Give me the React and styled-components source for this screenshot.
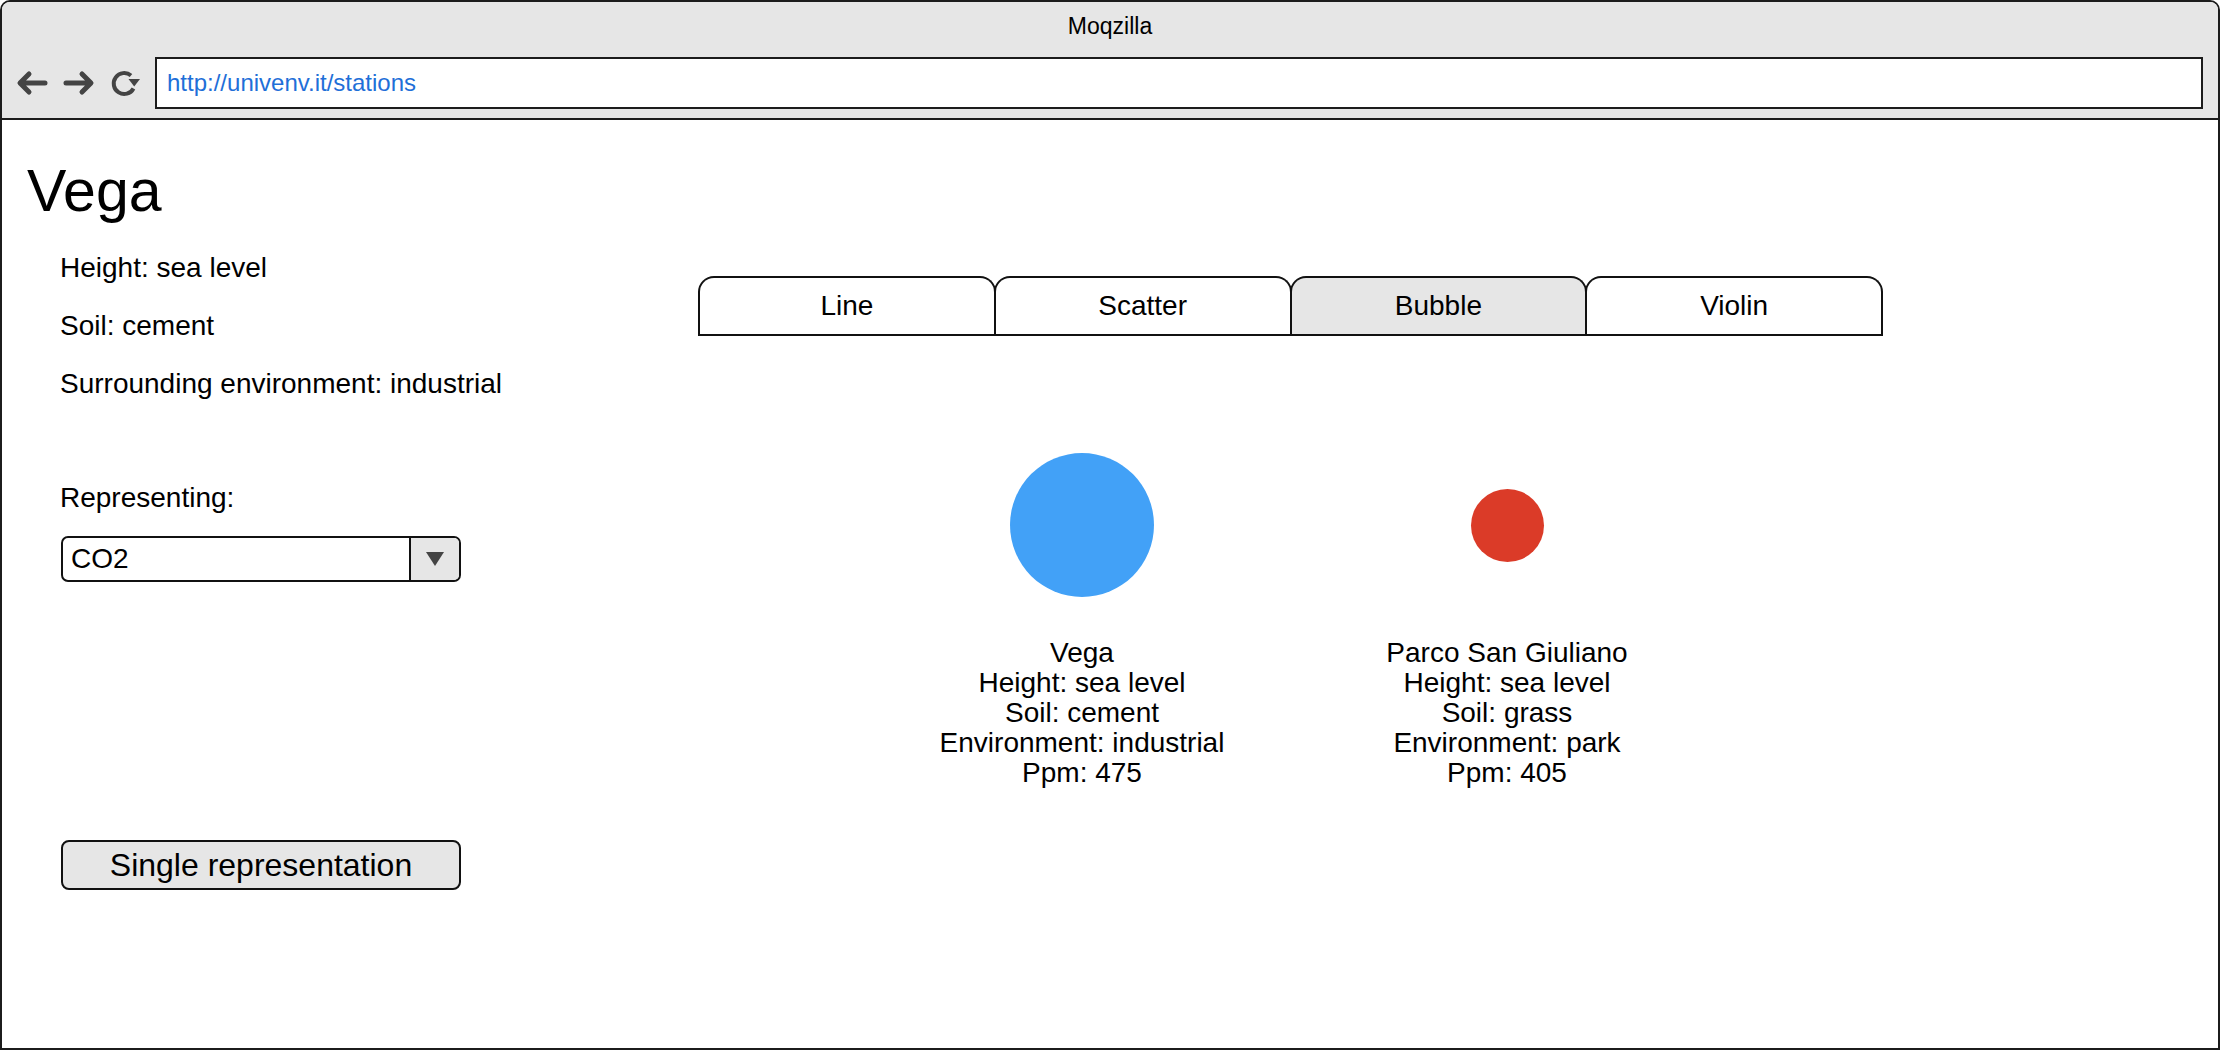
import styled, { createGlobalStyle } from "styled-components";

const GlobalStyle = createGlobalStyle`
  body {
    margin: 0;
    font-family: "Liberation Sans", Arial, sans-serif;
    color: #000;
    background: #fff;
  }
`;

// browser chrome
const Window = styled.div`
  width: 2220px;
  height: 1050px;
  box-sizing: border-box;
  border: 2px solid #1c1c1c;
  border-radius: 10px 10px 0 0;
  overflow: hidden;
  display: flex;
  flex-direction: column;
`;

const TitleBar = styled.header`
  background: #e6e6e6;
  border-bottom: 2px solid #1c1c1c;
  padding-bottom: 9px;
`;

const Title = styled.div`
  height: 55px;
  box-sizing: border-box;
  padding-top: 10px;
  font-size: 23px;
  line-height: 28px;
  text-align: center;
`;

const NavRow = styled.div`
  display: flex;
  align-items: center;
  gap: 15px;
  padding: 0 15px 0 14px;
`;

const NavIcon = styled.svg`
  flex: none;
  display: block;
`;

const UrlBox = styled.div`
  flex: 1;
  height: 52px;
  box-sizing: border-box;
  border: 2px solid #1c1c1c;
  background: #fff;
  display: flex;
  align-items: center;
  padding-left: 10px;
  font-size: 24px;
  color: #1f6fd8;
`;

// page
const Body = styled.main`
  flex: 1;
  display: flex;
`;

const LeftPanel = styled.section`
  width: 500px;
  flex: none;
  padding: 38px 0 0 25px;
  box-sizing: border-box;
  display: flex;
  flex-direction: column;
`;

const Heading = styled.h1`
  margin: 0;
  font-size: 59px;
  font-weight: normal;
  line-height: 66px;
`;

const InfoList = styled.div`
  display: flex;
  flex-direction: column;
  gap: 26px;
  margin: 28px 0 0 33px;
`;

const Info = styled.div`
  font-size: 28px;
  line-height: 32px;
  white-space: nowrap;
  margin-top: ${(p) => p.$top || 0}px;
`;

const Select = styled.div`
  margin: 22px 0 0 34px;
  width: 400px;
  height: 46px;
  box-sizing: border-box;
  border: 2px solid #111;
  border-radius: 7px;
  display: flex;
  overflow: hidden;
`;

const SelectValue = styled.div`
  flex: 1;
  display: flex;
  align-items: center;
  padding-left: 8px;
  font-size: 28px;
`;

const SelectArrow = styled.div`
  width: 48px;
  border-left: 2px solid #111;
  background: #e6e6e6;
  display: flex;
  align-items: center;
  justify-content: center;

  &::after {
    content: "";
    border-left: 9px solid transparent;
    border-right: 9px solid transparent;
    border-top: 14px solid #444;
  }
`;

const Button = styled.button`
  margin: 258px 0 0 34px;
  width: 400px;
  height: 50px;
  box-sizing: border-box;
  border: 2px solid #111;
  border-radius: 8px;
  background: #e6e6e6;
  font-family: inherit;
  font-size: 32px;
  color: #000;
  padding: 0;
`;

const MainPanel = styled.section`
  flex: 1;
  padding: 156px 0 0 196px;
  display: flex;
  flex-direction: column;
  align-items: flex-start;
`;

const TabBar = styled.div`
  width: 1185px;
  display: flex;
  border-bottom: 2px solid #111;
`;

const Tab = styled.div`
  flex: 1;
  height: 58px;
  box-sizing: border-box;
  border: 2px solid #111;
  border-bottom: none;
  border-radius: 16px 16px 0 0;
  background: ${(p) => (p.$active ? "#e6e6e6" : "#fff")};
  display: flex;
  align-items: center;
  justify-content: center;
  font-size: 28px;

  & + & {
    margin-left: -2px;
  }
`;

const BubbleRow = styled.div`
  display: flex;
  gap: 125px;
  margin: 117px 0 0 234px;
`;

const BubbleColumn = styled.div`
  width: 300px;
  display: flex;
  flex-direction: column;
  align-items: center;
`;

const BubbleSpot = styled.div`
  height: 144px;
  display: flex;
  align-items: center;
`;

const Bubble = styled.div`
  width: ${(p) => p.$size}px;
  height: ${(p) => p.$size}px;
  border-radius: 50%;
  background: ${(p) => p.$color};
`;

const BubbleLabel = styled.div`
  margin-top: 41px;
  font-size: 28px;
  line-height: 30px;
  text-align: center;
  white-space: nowrap;
`;

const stations = [
  {
    name: "Vega",
    height: "sea level",
    soil: "cement",
    env: "industrial",
    ppm: 475,
    color: "#42a1f7",
    size: 144,
  },
  {
    name: "Parco San Giuliano",
    height: "sea level",
    soil: "grass",
    env: "park",
    ppm: 405,
    color: "#db3b28",
    size: 73,
  },
];

const tabs = ["Line", "Scatter", "Bubble", "Violin"];

function BackIcon() {
  return (
    <NavIcon width="32" height="26" viewBox="0 0 32 26">
      <path d="M29 13H5M13 4L4 13L13 22" fill="none" stroke="#444" strokeWidth="5" strokeLinecap="round" strokeLinejoin="round" />
    </NavIcon>
  );
}

function ForwardIcon() {
  return (
    <NavIcon width="32" height="26" viewBox="0 0 32 26">
      <path d="M3 13H27M19 4L28 13L19 22" fill="none" stroke="#444" strokeWidth="5" strokeLinecap="round" strokeLinejoin="round" />
    </NavIcon>
  );
}

function ReloadIcon() {
  return (
    <NavIcon width="30" height="32" viewBox="0 0 30 32">
      <path d="M23.5 21.5A10.5 10.5 0 1 1 21 8.5" fill="none" stroke="#444" strokeWidth="4" />
      <path d="M18.5 12H30L24.2 19.5Z" fill="#444" />
    </NavIcon>
  );
}

export default function App() {
  return (
    <>
      <GlobalStyle />
      <Window>
        <TitleBar>
          <Title>Moqzilla</Title>
          <NavRow>
            <BackIcon />
            <ForwardIcon />
            <ReloadIcon />
            <UrlBox>http://univenv.it/stations</UrlBox>
          </NavRow>
        </TitleBar>
        <Body>
          <LeftPanel>
            <Heading>Vega</Heading>
            <InfoList>
              <Info>Height: sea level</Info>
              <Info>Soil: cement</Info>
              <Info>Surrounding environment: industrial</Info>
              <Info $top={56}>Representing:</Info>
            </InfoList>
            <Select>
              <SelectValue>CO2</SelectValue>
              <SelectArrow />
            </Select>
            <Button>Single representation</Button>
          </LeftPanel>
          <MainPanel>
            <TabBar>
              {tabs.map((t) => (
                <Tab key={t} $active={t === "Bubble"}>
                  {t}
                </Tab>
              ))}
            </TabBar>
            <BubbleRow>
              {stations.map((s) => (
                <BubbleColumn key={s.name}>
                  <BubbleSpot>
                    <Bubble $size={s.size} $color={s.color} />
                  </BubbleSpot>
                  <BubbleLabel>
                    {s.name}
                    <br />
                    Height: {s.height}
                    <br />
                    Soil: {s.soil}
                    <br />
                    Environment: {s.env}
                    <br />
                    Ppm: {s.ppm}
                  </BubbleLabel>
                </BubbleColumn>
              ))}
            </BubbleRow>
          </MainPanel>
        </Body>
      </Window>
    </>
  );
}
